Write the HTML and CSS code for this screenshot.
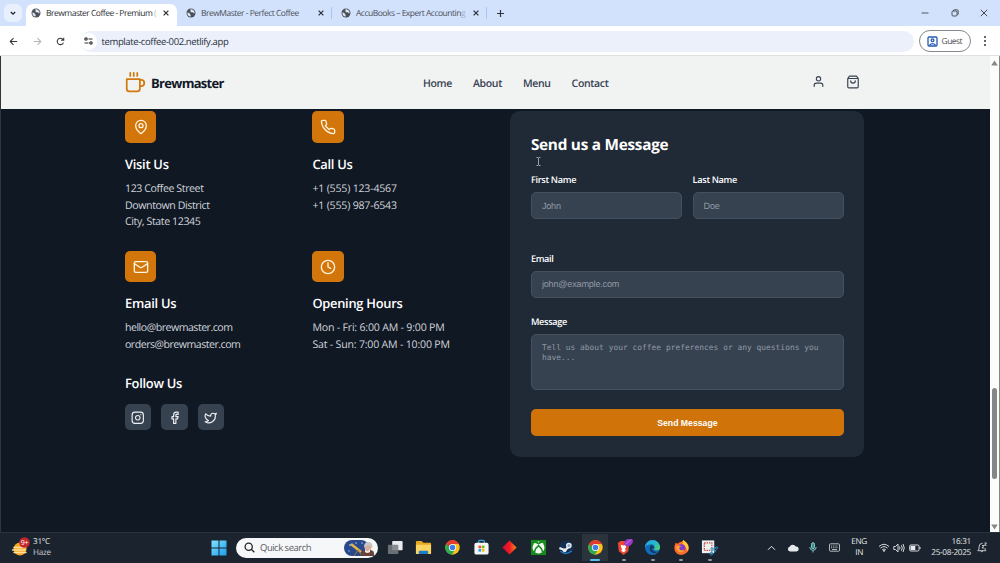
FILE: index.html
```
<!DOCTYPE html>
<html lang="en">
<head>
    <meta charset="UTF-8">
    <meta name="viewport" content="width=device-width, initial-scale=1.0">
    <title>Brewmaster Coffee - Premium Coffee</title>
    <link rel="stylesheet" href="styles.css">
</head>
<body>
    <!-- shared icons -->
    <svg class="sprite" width="0" height="0">
        <symbol id="globe" viewBox="0 0 20 20">
            <circle cx="10" cy="10" r="9" fill="#4d5157"/>
            <path d="M3 9c2 0 4 1 5 3s2 2 1 5c-4 0-7-4-6-8zM9 2.500c-1 2 1 2 0 4s2 2 4 2 2 3 4 2c1-4-3-8-8-8z" fill="#dce6f8"/>
        </symbol>
        <symbol id="close" viewBox="0 0 10 10">
            <path d="M2 2l6 6M8 2l-6 6" stroke="#30343b" stroke-width="1.600"/>
        </symbol>
        <symbol id="chrome" viewBox="0 0 24 24">
            <circle cx="12" cy="12" r="11.500" fill="#fbc116"/>
            <path d="M12 12L2 6.300A11.500 11.500 0 0 1 22 6.300H12z" fill="#e33b2e"/>
            <path d="M12 12L2 6.300A11.500 11.500 0 0 0 11 23.500l5.500-9z" fill="#2da94f"/>
            <path d="M2 6.300L7 15l5-8.700z" fill="#2da94f"/>
            <path d="M2 6.300A11.500 11.500 0 0 1 22 6.300H12A5.700 5.700 0 0 0 6.500 11z" fill="#e33b2e"/>
            <circle cx="12" cy="12" r="5.700" fill="#fff"/>
            <circle cx="12" cy="12" r="4.400" fill="#3b7ded"/>
        </symbol>
    </svg>

    <div class="tab-bar">
        <div class="tab-search">
            <svg width="8" height="8" viewBox="0 0 8 8"><path d="M1.800 3l2.200 2.200L6.200 3" fill="none" stroke="#222" stroke-width="1.300"/></svg>
        </div>
        <div class="tab active">
            <svg class="favicon"><use href="#globe"/></svg>
            <span class="tab-title">Brewmaster Coffee - Premium <i>(</i></span>
            <svg class="tab-close"><use href="#close"/></svg>
        </div>
        <div class="tab">
            <svg class="favicon"><use href="#globe"/></svg>
            <span class="tab-title">BrewMaster - Perfect Coffee</span>
            <svg class="tab-close"><use href="#close"/></svg>
        </div>
        <div class="tab">
            <svg class="favicon"><use href="#globe"/></svg>
            <span class="tab-title">AccuBooks – Expert Accountin<i>g</i></span>
            <svg class="tab-close"><use href="#close"/></svg>
        </div>
        <svg class="new-tab" width="9" height="9" viewBox="0 0 9 9"><path d="M4.500 1v7M1 4.500h7" stroke="#30343b" stroke-width="1.200"/></svg>
        <div class="window-controls">
            <svg width="8" height="8" viewBox="0 0 8 8"><path d="M.5 4h7" stroke="#333" stroke-width=".8"/></svg>
            <svg width="8" height="8" viewBox="0 0 8 8" fill="none" stroke="#333" stroke-width=".8"><rect x="1" y="2" width="5" height="5" rx="1"/><path d="M2.500 2V1.500q0-.7.7-.7H6q1.200 0 1.200 1.200v3q0 .7-.7.700"/></svg>
            <svg width="8" height="8" viewBox="0 0 8 8"><path d="M.8.800l6.400 6.400M7.200.800L.8 7.200" stroke="#333" stroke-width=".9"/></svg>
        </div>
    </div>

    <div class="toolbar">
        <svg class="nav-icon" viewBox="0 0 10 10"><path d="M9 5H1.500M5 1.300L1.300 5 5 8.700"/></svg>
        <svg class="nav-icon disabled" viewBox="0 0 10 10"><path d="M1 5h7.500M5 1.300L8.700 5 5 8.700"/></svg>
        <svg class="nav-icon" viewBox="0 0 10 10"><path d="M8.300 6.200A3.600 3.600 0 1 1 8 3M8.600.8v2.900H5.700"/></svg>
        <div class="address">
            <span class="site-info">
                <svg width="9" height="8" viewBox="0 0 9 8" fill="none" stroke="#333" stroke-width="1.200"><circle cx="2" cy="2" r="1.200"/><path d="M4.500 2h4M.5 6h4"/><circle cx="7" cy="6" r="1.200"/></svg>
            </span>
            <span>template-coffee-002.netlify.app</span>
        </div>
        <div class="guest">
            <svg width="11" height="11" viewBox="0 0 11 11" fill="none" stroke="#2459b3" stroke-width="1.300"><rect x="1" y="1" width="9" height="9" rx="1"/><circle cx="5.500" cy="4.200" r="1.400"/><path d="M2.500 9.300q3-3.200 6 0"/></svg>
            <span>Guest</span>
        </div>
        <svg class="dots" width="4" height="12" viewBox="0 0 4 12" fill="#333"><circle cx="2" cy="2" r="1"/><circle cx="2" cy="6" r="1"/><circle cx="2" cy="10" r="1"/></svg>
    </div>

    <div class="viewport">
        <div class="page">
            <header class="header">
                <div class="logo">
                    <svg width="21" height="21" viewBox="0 0 24 24"><path d="M6 1v3.500M10 1v3.500M14 1v3.500M17 9h1.500a3.500 3.500 0 1 1 0 7H17M2 8h15v11a3 3 0 0 1-3 3H5a3 3 0 0 1-3-3Z"/></svg>
                    <span>Brewmaster</span>
                </div>
                <nav class="nav">
                    <a>Home</a>
                    <a>About</a>
                    <a>Menu</a>
                    <a>Contact</a>
                </nav>
                <div class="header-actions">
                    <svg width="13" height="13" viewBox="0 0 24 24"><path d="M20 21v-2a4 4 0 0 0-4-4H8a4 4 0 0 0-4 4v2"/><circle cx="12" cy="7" r="4"/></svg>
                    <svg width="14" height="14" viewBox="0 0 24 24"><path d="M6 2 3 6v14a2 2 0 0 0 2 2h14a2 2 0 0 0 2-2V6l-3-4ZM3 6h18M16 10a4 4 0 0 1-8 0"/></svg>
                </div>
            </header>

            <section class="contact">
                <div class="contact-info">
                    <div class="info-grid">
                        <div class="info-item">
                            <div class="info-icon"><svg viewBox="0 0 24 24"><path d="M20 10c0 6-8 12-8 12s-8-6-8-12a8 8 0 0 1 16 0Z"/><circle cx="12" cy="10" r="3"/></svg></div>
                            <h3>Visit Us</h3>
                            <p>123 Coffee Street<br>Downtown District<br>City, State 12345</p>
                        </div>
                        <div class="info-item">
                            <div class="info-icon"><svg viewBox="0 0 24 24"><path d="M22 16.920v3a2 2 0 0 1-2.180 2 19.790 19.790 0 0 1-8.630-3.070 19.500 19.500 0 0 1-6-6 19.790 19.790 0 0 1-3.070-8.670A2 2 0 0 1 4.110 2h3a2 2 0 0 1 2 1.720 12.840 12.840 0 0 0 .7 2.810 2 2 0 0 1-.45 2.110L8.090 9.910a16 16 0 0 0 6 6l1.270-1.270a2 2 0 0 1 2.110-.45 12.840 12.840 0 0 0 2.810.7A2 2 0 0 1 22 16.920z"/></svg></div>
                            <h3>Call Us</h3>
                            <p class="numbers">+1 (555) 123-4567<br>+1 (555) 987-6543</p>
                        </div>
                        <div class="info-item">
                            <div class="info-icon"><svg viewBox="0 0 24 24"><rect x="2" y="4" width="20" height="16" rx="2"/><path d="m22 7-8.970 5.700a1.940 1.940 0 0 1-2.060 0L2 7"/></svg></div>
                            <h3>Email Us</h3>
                            <p class="emails">hello@brewmaster.com<br>orders@brewmaster.com</p>
                        </div>
                        <div class="info-item">
                            <div class="info-icon"><svg viewBox="0 0 24 24"><circle cx="12" cy="12" r="10"/><path d="M12 6v6l4 2"/></svg></div>
                            <h3>Opening Hours</h3>
                            <p class="numbers">Mon - Fri: 6:00 AM - 9:00 PM<br>Sat - Sun: 7:00 AM - 10:00 PM</p>
                        </div>
                    </div>
                    <div class="social">
                        <h3>Follow Us</h3>
                        <div class="social-links">
                            <a><svg viewBox="0 0 24 24"><rect x="2" y="2" width="20" height="20" rx="5"/><path d="M16 11.370A4 4 0 1 1 12.630 8 4 4 0 0 1 16 11.370zM17.500 6.500h.01"/></svg></a>
                            <a><svg viewBox="0 0 24 24"><path d="M18 2h-3a5 5 0 0 0-5 5v3H7v4h3v8h4v-8h3l1-4h-4V7a1 1 0 0 1 1-1h3z"/></svg></a>
                            <a><svg viewBox="0 0 24 24"><path d="M22 4s-.7 2.100-2 3.400c1.600 10-9.400 17.300-18 11.600 2.200.1 4.400-.6 6-2C3 15.500.5 9.600 3 5c2.200 2.600 5.600 4.100 9 4-.9-4.200 4-6.600 7-3.800 1.100 0 3-1.200 3-1.200z"/></svg></a>
                        </div>
                    </div>
                </div>

                <form class="contact-form">
                    <h2>Send us a Message</h2>
                    <div class="form-row">
                        <div class="form-group">
                            <label for="firstName">First Name</label>
                            <input type="text" id="firstName" placeholder="John">
                        </div>
                        <div class="form-group">
                            <label for="lastName">Last Name</label>
                            <input type="text" id="lastName" placeholder="Doe">
                        </div>
                    </div>
                    <div class="form-group">
                        <label for="email">Email</label>
                        <input type="email" id="email" placeholder="john@example.com">
                    </div>
                    <div class="form-group">
                        <label for="message">Message</label>
                        <textarea id="message" placeholder="Tell us about your coffee preferences or any questions you have..."></textarea>
                    </div>
                    <button type="button">Send Message</button>
                    <svg class="cursor" width="5" height="9" viewBox="0 0 5 9"><path d="M.5.500h1.500l.5.500.5-.5h1.500M2.500 1v7M.5 8.500H2l.5-.5.500.5h1.500" fill="none" stroke="#b9bcc0" stroke-width=".8"/></svg>
                </form>
            </section>
        </div>
        <div class="scrollbar">
            <svg width="7" height="6" viewBox="0 0 7 6"><path d="M3.500.500L6.800 5.500H.2z" fill="#85878a"/></svg>
            <div class="thumb"></div>
            <svg width="7" height="6" viewBox="0 0 7 6"><path d="M3.500 5.500L6.800.500H.2z" fill="#85878a"/></svg>
        </div>
    </div>

    <div class="taskbar">
        <div class="weather">
            <svg width="20" height="21" viewBox="0 0 20 21">
                <circle cx="9" cy="12" r="6.500" fill="#f7a823"/>
                <path d="M3 10.500h12M1.500 13h13M3 15.500h12" stroke="#ffe09a" stroke-width="1.300" stroke-linecap="round"/>
                <circle cx="13.500" cy="5.500" r="5.300" fill="#c4262c"/>
                <text x="13.500" y="8.200" text-anchor="middle" class="badge-text">9+</text>
            </svg>
            <div>31°C<br><span>Haze</span></div>
        </div>
        <svg class="start" width="16" height="16" viewBox="0 0 16 16">
            <linearGradient id="win" x2="1" y2="1"><stop stop-color="#82e3fb"/><stop offset="1" stop-color="#1a9df0"/></linearGradient>
            <path d="M.5.500h7v7h-7zM8.500.500h7v7h-7zM.5 8.500h7v7h-7zM8.500 8.500h7v7h-7z" fill="url(#win)"/>
        </svg>
        <div class="search">
            <svg width="11" height="11" viewBox="0 0 11 11" fill="none" stroke="#22272c" stroke-width="1.300"><circle cx="4.700" cy="4.700" r="3.600"/><path d="M7.300 7.300l3 3"/></svg>
            <span>Quick search</span>
            <svg class="search-art" width="33" height="18" viewBox="0 0 33 18">
                <rect x="0" y="1" width="25" height="16" rx="8" fill="#28498c"/>
                <circle cx="6" cy="6" r="1" fill="#7fb2ec"/><circle cx="12" cy="4" r=".8" fill="#a9c9f2"/><circle cx="5" cy="12" r=".8" fill="#7fb2ec"/><circle cx="18" cy="4" r="1" fill="#6d8fd0"/>
                <path d="M7 5l10 8" stroke="#dfb24d" stroke-width="2.600"/>
                <path d="M14 11l-4 6M14 11l4 6" stroke="#a77635" stroke-width="1"/>
                <path d="M17 17q0-6 5-6h4q5 0 4 6z" fill="#6b4237"/>
                <circle cx="24" cy="8" r="3.600" fill="#d8ad98"/>
                <path d="M20 8q0-5 4.500-5t4 6l-2-3z" fill="#c8c4c8"/>
                <path d="M21 10q2 3 5 0v3q-3 2-5 0z" fill="#efe6df"/>
            </svg>
        </div>
        <div class="apps">
            <div class="app"><svg viewBox="0 0 18 18"><rect x="5.500" y="2" width="11" height="10" rx="1" fill="#e9ecee"/><rect x="1" y="6" width="11" height="10" rx="1" fill="#777c80" fill-opacity=".85"/></svg></div>
            <div class="app"><svg viewBox="0 0 18 18"><path d="M1 3q0-1 1-1h5l2 2h7q1 0 1 1v10q0 1-1 1H2q-1 0-1-1z" fill="#e5a922"/><path d="M1 6h16v9q0 1-1 1H2q-1 0-1-1z" fill="#fcd462"/><path d="M4 16v-2.500q0-1 1-1h8q1 0 1 1V16z" fill="#1d7fc9"/></svg></div>
            <div class="app"><svg viewBox="0 0 18 18"><use href="#chrome" x="1" y="1" width="16" height="16"/></svg></div>
            <div class="app"><svg viewBox="0 0 18 18"><path d="M6 5V2.500q0-1 1-1h4q1 0 1 1V5" fill="none" stroke="#3aa4dc" stroke-width="1.300"/><rect x="1.500" y="4" width="15" height="12.500" rx="2" fill="#f3f6f8"/><path d="M5.800 7h2.800v2.800H5.800z" fill="#e8502a"/><path d="M9.400 7h2.800v2.800H9.400z" fill="#7fba00"/><path d="M5.800 10.600h2.800v2.800H5.800z" fill="#25a3e8"/><path d="M9.400 10.600h2.800v2.800H9.400z" fill="#fcb813"/></svg></div>
            <div class="app"><svg viewBox="0 0 18 18"><linearGradient id="dia" x2="1"><stop stop-color="#d8093a"/><stop offset=".5" stop-color="#ee1c22"/><stop offset="1" stop-color="#f98a1f"/></linearGradient><path d="M9 1.500L16.500 9 9 16.500 1.500 9z" fill="url(#dia)"/></svg></div>
            <div class="app"><svg viewBox="0 0 18 18"><rect x="1" y="1" width="16" height="16" fill="#178a1c"/><circle cx="9" cy="9" r="6.300" fill="#f5f7f5"/><path d="M4.500 14Q6 9 9 7q3 2 4.500 7M5.500 3.300Q7.500 3.500 9 5q1.500-1.500 3.500-1.700" fill="none" stroke="#178a1c" stroke-width="1.700"/></svg></div>
            <div class="app"><svg viewBox="0 0 18 18"><circle cx="9" cy="9" r="7.500" fill="#142d55"/><path d="M1.500 9.500l6 2.500 3-3" stroke="#e9eef2" stroke-width="2.300" fill="none"/><circle cx="11.500" cy="7" r="2.300" fill="#8fa6bd" stroke="#e9eef2" stroke-width="1.400"/><circle cx="7" cy="12" r="2" fill="#e9eef2"/><path d="M2.500 13q6 5 12-.5" stroke="#237ebf" stroke-width="1.500" fill="none"/></svg></div>
            <div class="app current"><svg viewBox="0 0 18 18"><use href="#chrome" x="1" y="1" width="16" height="16"/></svg></div>
            <div class="app open"><svg viewBox="0 0 18 18"><path d="M2 4l3-2h7l2 3-1 8-5 4-5-4z" fill="#ef4630"/><path d="M5 6l3 1 3-1-.5 3-1 1.500 1 2-2.500 1.500-2.500-1.500 1-2L5.500 9z" fill="#fff"/><ellipse cx="13.300" cy="3.500" rx="5" ry="3.700" fill="#9838c5" transform="rotate(-35 13.300 3.500)"/><path d="M10 5.500l6-4.500" stroke="#cf77e2"/></svg></div>
            <div class="app open"><svg viewBox="0 0 18 18"><linearGradient id="edge" x2="1" y2="1"><stop stop-color="#23a3e5"/><stop offset=".5" stop-color="#25b9cc"/><stop offset="1" stop-color="#5ed35d"/></linearGradient><circle cx="9" cy="9" r="8" fill="#136bbb"/><path d="M1 9a8 8 0 0 1 16 0q0 3-3.500 3T11 10q1-5-4-4.500T1 9z" fill="url(#edge)"/><path d="M7 7q-3 6 3 8 3 0 5-1.500-5 1-6.500-2T11 10Q10 6 7 7z" fill="#14375f"/></svg></div>
            <div class="app open"><svg viewBox="0 0 18 18"><path d="M3 4l2 1Q7 3 9 3l2-2q4 3 5 5 2 5-1 8-3 3-6 3-4 0-6.500-3.500Q0 9 3 4z" fill="#ff6b2b"/><path d="M11 1q4 3 5 6 1 4-1 6-1-6-5-8z" fill="#ffce3d"/><circle cx="9" cy="9.500" r="4" fill="#803ed0"/><path d="M3 8q3-2 6 0-3 0-2 3 2 2 5 0-1 4-5 3-3-1-4-6z" fill="#ffa12e"/></svg></div>
            <div class="app open"><svg viewBox="0 0 18 18"><path d="M1 1.500h13V15H1z" fill="#edf0f1"/><path d="M3.500 4h8v8h-8z" fill="none" stroke="#bf4a38" stroke-width="1.300" stroke-dasharray="1.500 1"/><path d="M11 16l1-6 4-1M10 10l6 3" stroke="#46a4d4" stroke-width="1.300" fill="none"/><circle cx="11" cy="15.500" r="1.500" fill="none" stroke="#2d8ec4"/><circle cx="16.500" cy="9.500" r="1.200" fill="none" stroke="#2d8ec4"/></svg></div>
        </div>
        <div class="tray">
            <svg class="tray-up" width="9" height="6" viewBox="0 0 9 6"><path d="M1 4.800l3.500-3.500L8 4.800" fill="none" stroke="#e1e4e6"/></svg>
            <svg class="tray-cloud" width="12" height="8" viewBox="0 0 12 8"><path d="M3 7.500a2.400 2.400 0 0 1-.3-4.700 3.300 3.300 0 0 1 6-.3A2.500 2.500 0 0 1 9.500 7.500z" fill="#e6e9eb"/></svg>
            <svg class="tray-mic" width="8" height="11" viewBox="0 0 8 11" fill="none" stroke="#7fc6c4"><rect x="2.500" y=".7" width="3" height="6" rx="1.500" fill="#3e8f91"/><path d="M.8 5q0 3.300 3.200 3.300T7.200 5M4 8.300v2.200"/></svg>
            <svg class="tray-kb" width="11" height="9" viewBox="0 0 11 9" fill="none" stroke="#c6cacd" stroke-width=".9"><rect x=".5" y=".8" width="10" height="7.400" rx="1"/><path d="M2 3h7M2 4.700h7" stroke-dasharray="1 .8"/><path d="M3 6.500h5"/></svg>
            <div class="lang">ENG<br>IN</div>
            <svg class="tray-wifi" width="12" height="9" viewBox="0 0 12 9" fill="none" stroke="#d5d8da"><path d="M1 3.500q5-4.500 10 0M2.500 5.200q3.500-3.200 7 0M4.200 6.800q1.800-1.700 3.600 0"/><circle cx="6" cy="7.800" r=".6" fill="#d5d8da"/></svg>
            <svg class="tray-sound" width="12" height="10" viewBox="0 0 12 10" fill="none" stroke="#d5d8da"><path d="M.8 3.500h1.700L5 1v8L2.500 6.500H.8z"/><path d="M6.500 3.500q1 1.500 0 3M8.300 2.200q2 2.800 0 5.600M10 1q2.500 4 0 8"/></svg>
            <svg class="tray-battery" width="12" height="8" viewBox="0 0 12 8"><rect x=".6" y="1" width="9.400" height="6" rx="1.300" fill="none" stroke="#d5d8da"/><rect x="1.500" y="2" width="4.800" height="4" fill="#e8eaeb"/><path d="M11 3v2" stroke="#d5d8da"/></svg>
            <div class="clock">16:31<br>25-08-2025</div>
            <svg class="tray-bell" width="10" height="11" viewBox="0 0 10 11" fill="none" stroke="#d5d8da" stroke-width=".9"><path d="M5.500 1.200Q2 1.500 2 5v2L.8 8.700h8L8 7V6M3.700 9q1.100 1.500 2.200 0M5 3.500h2L5 6h2M7.500 1h2l-2 2.300h2"/></svg>
        </div>
    </div>
</body>
</html>
```
FILE: styles.css
```
* {
    box-sizing: border-box;
    margin: 0;
    padding: 0;
}
body {
    width: 1000px;
    height: 563px;
    display: flex;
    flex-direction: column;
    overflow: hidden;
    background: #101824;
    font-family: "Open Sans", "Noto Sans", sans-serif;
    font-size: 10.5px;
    text-rendering: geometricPrecision;
}
svg {
    display: block;
    flex: none;
}
.sprite {
    position: absolute;
}

/* browser window */
.tab-bar {
    height: 26px;
    flex: none;
    display: flex;
    align-items: center;
    background: #d3e2fc;
    color: #4a4f57;
    font-size: 8.5px;
}
.tab-search {
    width: 18px;
    height: 18px;
    margin: 0 4px 0 4px;
    display: flex;
    align-items: center;
    justify-content: center;
    border-radius: 6px;
    background: #e8f0fd;
}
.tab {
    width: 155px;
    height: 22px;
    padding: 0 6px 0 9px;
    display: flex;
    align-items: center;
    border-right: 1px solid #a9c5f3;
    border-image: linear-gradient(transparent 25%, #a9c5f3 25%, #a9c5f3 75%, transparent 75%) 1;
}
.tab.active {
    width: 151px;
    height: 22px;
    margin-top: 4px;
    padding: 0 7px 4px 5px;
    border: none;
    border-radius: 7px 7px 0 0;
    background: #fff;
    color: #2b2e33;
}
.favicon {
    width: 10px;
    height: 10px;
    margin-right: 5px;
}
.tab-title {
    flex: 1;
    white-space: nowrap;
    letter-spacing: -0.5px;
}
.tab-title i {
    font-style: normal;
    opacity: 0.35;
}
.tab-close {
    width: 8px;
    height: 8px;
}
.new-tab {
    margin-left: 9px;
}
.window-controls {
    margin-left: auto;
    margin-right: 12px;
    display: flex;
    gap: 21.500px;
}
.toolbar {
    height: 30px;
    flex: none;
    display: flex;
    align-items: center;
    padding: 1px 13px 0 9px;
    background: #fff;
    border-bottom: 1px solid #e0e1e3;
}
.nav-icon {
    width: 9px;
    height: 9px;
    margin-right: 14.500px;
    fill: none;
    stroke: #33373d;
    stroke-width: 1.2;
}
.nav-icon.disabled {
    stroke: #b3b6ba;
}
.address {
    width: 834px;
    height: 21px;
    display: flex;
    align-items: center;
    border-radius: 11px;
    background: #ebf0fa;
    color: #27313c;
    font-size: 9.5px;
    letter-spacing: -0.38px;
}
.site-info {
    width: 17px;
    height: 17px;
    margin: 0 5px 0 0;
    display: flex;
    align-items: center;
    justify-content: center;
    border-radius: 50%;
    background: #fff;
}
.guest {
    width: 52px;
    height: 22px;
    margin-left: 5px;
    padding-left: 7px;
    display: flex;
    align-items: center;
    gap: 4px;
    border: 1px solid #85888e;
    border-radius: 11px;
    color: #4c5056;
    font-size: 8.4px;
    letter-spacing: -0.45px;
}
.dots {
    margin-left: auto;
}
.viewport {
    height: 476px;
    flex: none;
    display: flex;
}
.page {
    width: 990px;
    border-left: 1px solid #30353c;
    background: #101824;
}
.scrollbar {
    width: 10px;
    padding: 4px 0 2px;
    display: flex;
    flex-direction: column;
    align-items: center;
    justify-content: space-between;
    background: #fcfcfc;
    border-right: 1px solid #7b8d7b;
}
.thumb {
    width: 5px;
    height: 91px;
    margin-top: 277px;
    border-radius: 3px;
    background: #858687;
}

/* header */
.header {
    height: 53px;
    padding: 0 130.500px 0 124px;
    display: grid;
    grid-template-columns: 298px 1fr auto;
    align-items: center;
    background: #f1f3f3;
}
.logo {
    display: flex;
    align-items: center;
    gap: 5px;
    color: #111827;
    font-size: 13px;
    font-weight: 700;
    letter-spacing: -0.7px;
}
.logo span {
    padding-top: 1px;
}
.logo svg {
    margin-top: -1px;
    fill: none;
    stroke: #d2790f;
    stroke-width: 2;
    stroke-linecap: round;
    stroke-linejoin: round;
}
.nav {
    padding-top: 2px;
    display: flex;
    gap: 21px;
    color: #374151;
    font-size: 10.5px;
    font-weight: 600;
    letter-spacing: -0.35px;
}
.header-actions {
    display: flex;
    gap: 20.500px;
    margin-top: -2px;
}
.header-actions svg {
    fill: none;
    stroke: #374151;
    stroke-width: 2;
    stroke-linecap: round;
    stroke-linejoin: round;
}

/* contact */
.contact {
    padding: 2.400px 125px 0 124px;
    display: grid;
    grid-template-columns: 354px 354px;
    gap: 31.400px;
    color: #fff;
}
.info-grid {
    display: grid;
    grid-template-columns: 166.400px 166.400px;
    gap: 20px 21px;
}
.info-item {
    min-height: 118.500px;
}
.info-icon {
    width: 31.300px;
    height: 31.300px;
    margin-bottom: 11.200px;
    display: flex;
    align-items: center;
    justify-content: center;
    border-radius: 5px;
    background: #d2760c;
}
.info-icon svg {
    width: 16px;
    height: 16px;
    fill: none;
    stroke: #fff4dc;
    stroke-width: 2;
    stroke-linecap: round;
    stroke-linejoin: round;
}
.contact h3 {
    font-size: 12.9px;
    font-weight: 600;
    line-height: 21px;
    letter-spacing: -0.27px;
    white-space: nowrap;
}
.info-item p {
    margin-top: 6px;
    color: #d1d5db;
    font-size: 10.6px;
    line-height: 16.700px;
    letter-spacing: -0.4px;
    white-space: nowrap;
}
.info-item .numbers {
    letter-spacing: -0.2px;
}
.info-item .emails {
    letter-spacing: -0.5px;
}
.info-item:nth-child(n+3) {
    min-height: 102.500px;
}
.social {
    margin-top: 19.500px;
}
.social-links {
    margin-top: 10px;
    display: flex;
    gap: 10.400px;
}
.social-links a {
    width: 26.100px;
    height: 26.100px;
    display: flex;
    align-items: center;
    justify-content: center;
    border-radius: 5px;
    background: #374250;
}
.social-links svg {
    width: 13.500px;
    height: 13.500px;
    fill: none;
    stroke: #eef0f2;
    stroke-width: 2;
    stroke-linecap: round;
    stroke-linejoin: round;
}
.contact-form {
    position: relative;
    height: 345.500px;
    padding: 21px 20.500px;
    border-radius: 10px;
    background: #1f2a36;
}
.contact-form h2 {
    margin-bottom: 14px;
    font-size: 15.3px;
    font-weight: 700;
    line-height: 26px;
    letter-spacing: -0.24px;
}
.form-row {
    display: grid;
    grid-template-columns: 1fr 1fr;
    gap: 10.400px;
    margin-bottom: 15.500px;
}
.form-group {
    margin-bottom: 16px;
}
.form-group label {
    display: block;
    margin-bottom: 5px;
    font-size: 9.2px;
    font-weight: 600;
    line-height: 15px;
    letter-spacing: -0.33px;
}
.form-group input,
.form-group textarea {
    display: block;
    width: 100%;
    height: 27px;
    padding: 0 10px;
    border: 1px solid #435060;
    border-radius: 5px;
    background: #374250;
    font-family: "Liberation Sans", sans-serif;
    font-size: 9.1px;
    letter-spacing: -0.2px;
    resize: none;
    text-rendering: inherit;
}
.form-group textarea {
    height: 56.500px;
    padding-top: 8px;
    font-family: "DejaVu Sans Mono", monospace;
    font-size: 7.93px;
    line-height: 10px;
    letter-spacing: 0;
    overflow: hidden;
}
.form-group ::placeholder {
    color: #9099a6;
}
.contact-form button {
    display: block;
    width: 100%;
    height: 26.500px;
    margin-top: 19px;
    border: none;
    border-radius: 5px;
    background: #d0740a;
    color: #fff;
    font-family: "Liberation Sans", sans-serif;
    font-size: 8.7px;
    font-weight: 700;
}
.cursor {
    position: absolute;
    left: 26px;
    top: 46px;
}

/* taskbar */
.taskbar {
    height: 31px;
    flex: none;
    display: flex;
    align-items: center;
    padding-bottom: 1px;
    border-top: 1px solid #2a3440;
    background: #1b242e;
    color: #e8eaec;
    font-size: 8.2px;
    letter-spacing: -0.3px;
}
.weather {
    width: 211px;
    padding-left: 11px;
    display: flex;
    align-items: center;
    gap: 2px;
    line-height: 10.500px;
}
.weather span {
    color: #c6cace;
}
.badge-text {
    fill: #fff;
    font-size: 7px;
}
.search {
    width: 142px;
    height: 20px;
    margin-left: 9px;
    padding: 0 1px 0 8px;
    display: flex;
    align-items: center;
    gap: 5px;
    border-radius: 10px;
    background: #f5f7f8;
    color: #5b6066;
    font-size: 9.5px;
    letter-spacing: -0.5px;
}
.search-art {
    margin-left: auto;
}
.apps {
    margin-left: 3px;
    display: flex;
}
.app {
    width: 28.600px;
    height: 27px;
    display: flex;
    align-items: center;
    justify-content: center;
    position: relative;
}
.app svg {
    width: 17px;
    height: 17px;
}
.current {
    background: linear-gradient(#2b333c, #2b333c) center / 26px 27px no-repeat;
}
.open::after,
.current::after {
    content: "";
    position: absolute;
    bottom: 0;
    width: 4px;
    height: 2px;
    border-radius: 1px;
    background: #92999f;
}
.current::after {
    width: 10px;
    background: #59c1ee;
}
.tray {
    flex: 1;
    margin-left: 43px;
    margin-right: 13px;
    display: flex;
    align-items: center;
    line-height: 10.500px;
}
.tray-cloud {
    margin-left: 11px;
}
.tray-mic {
    margin-left: 10px;
}
.tray-kb {
    margin-left: 12px;
}
.lang {
    width: 20px;
    margin-left: 9px;
    text-align: center;
}
.tray-wifi {
    margin-left: 9px;
}
.tray-sound {
    margin-left: 3px;
}
.tray-battery {
    margin-left: 4px;
}
.clock {
    margin-left: auto;
    text-align: right;
    white-space: nowrap;
}
.tray-bell {
    margin-left: 6px;
}
```
